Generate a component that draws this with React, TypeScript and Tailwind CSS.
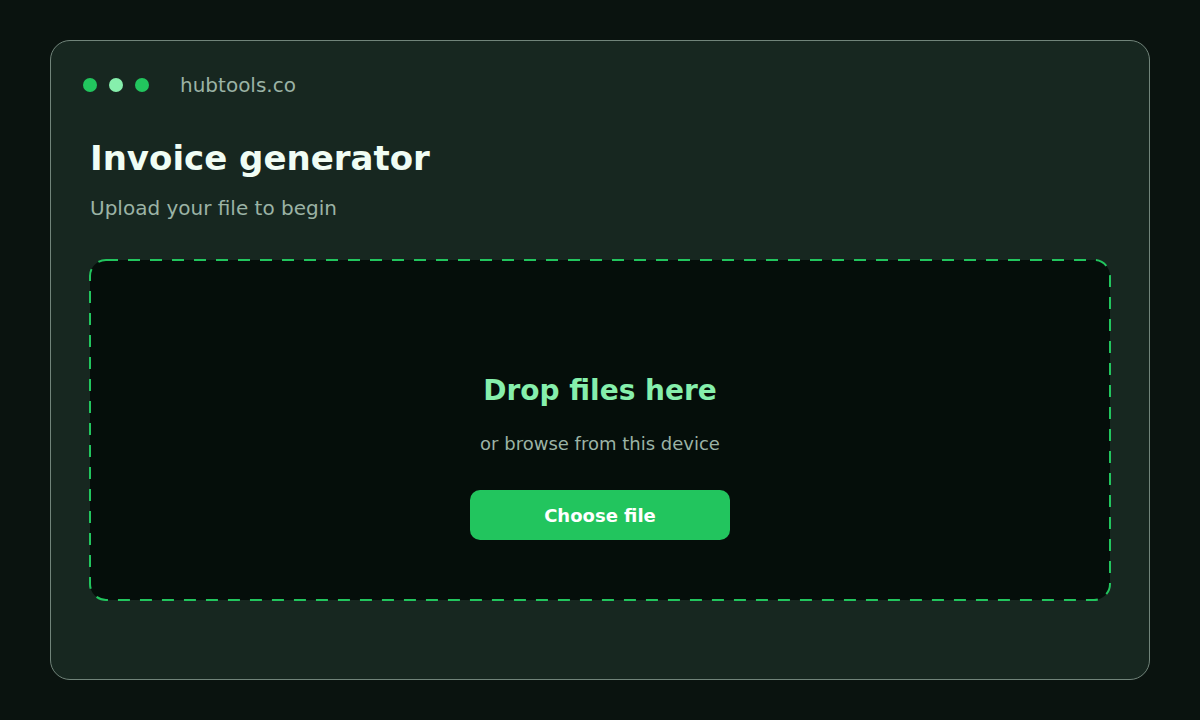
export default function App() {
  return (
    <div
      className="min-h-screen w-full bg-[#0a130f] flex items-start justify-center pt-10"
      style={{ fontFamily: '"DejaVu Sans", sans-serif' }}
    >
      <div className="w-[1100px] h-[640px] rounded-[20px] border border-[#71847a] bg-[#172720] flex flex-col">
        {/* Window bar */}
        <div className="flex items-center pt-[32px] pl-[32px]">
          <div className="flex items-center gap-3">
            <span className="w-[14px] h-[14px] rounded-full bg-[#22c55e]" />
            <span className="w-[14px] h-[14px] rounded-full bg-[#86efac]" />
            <span className="w-[14px] h-[14px] rounded-full bg-[#22c55e]" />
          </div>
          <span className="ml-[31px] text-[20px] leading-[24px] text-[#9bb3a5]">hubtools.co</span>
        </div>

        {/* Body */}
        <div className="px-[39px] pt-[41px]">
          <h1 className="text-[34px] leading-[40px] font-bold text-[#f0fdf4]">Invoice generator</h1>
          <p className="mt-[16px] text-[20px] leading-[28px] text-[#9bb3a5]">Upload your file to begin</p>

          {/* Drop zone */}
          <div className="relative mt-[38px] h-[340px] rounded-[16px] bg-[#050e0a] flex flex-col items-center pt-[114px]">
            <svg className="absolute inset-0 w-full h-full overflow-visible pointer-events-none">
              <rect
                x="0"
                y="0"
                width="100%"
                height="100%"
                rx="16"
                fill="none"
                stroke="#22c55e"
                strokeWidth="2"
                strokeDasharray="12 10"
              />
            </svg>
            <div className="text-[28px] leading-[34px] font-bold text-[#86efac]">Drop files here</div>
            <div className="mt-[24px] text-[18px] leading-[24px] text-[#9bb3a5]">or browse from this device</div>
            <button className="mt-[34px] w-[260px] h-[50px] rounded-[10px] bg-[#22c55e] text-white text-[18px] font-bold">
              Choose file
            </button>
          </div>
        </div>
      </div>
    </div>
  );
}
